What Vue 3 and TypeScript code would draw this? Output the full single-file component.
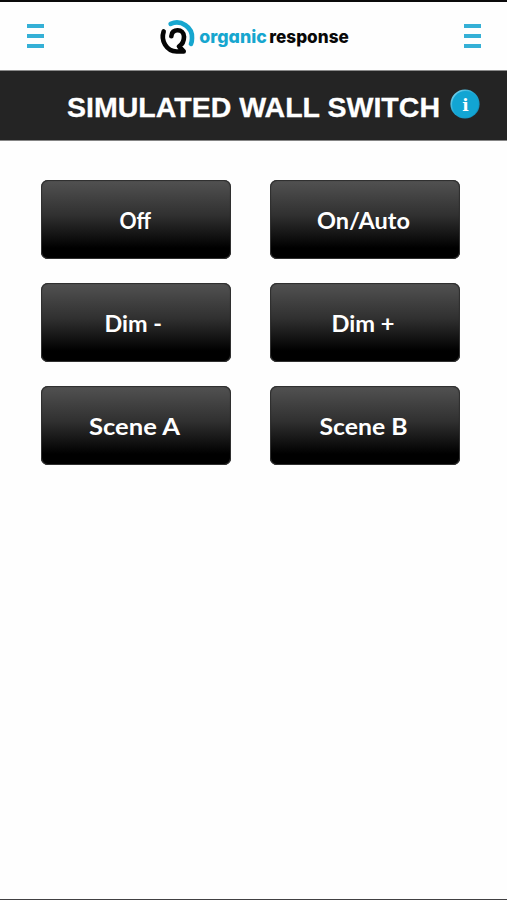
<script setup lang="ts">
interface SwitchButton {
  label: string
  x: number
  width: number
}

const buttons: SwitchButton[] = [
  { label: 'Off', x: 78.5, width: 31.5 },
  { label: 'On/Auto', x: 47, width: 93 },
  { label: 'Dim -', x: 63.5, width: 57.5 },
  { label: 'Dim +', x: 61.5, width: 63 },
  { label: 'Scene A', x: 48, width: 91 },
  { label: 'Scene B', x: 49.5, width: 88 },
]
</script>

<template>
  <div class="screen">
    <header class="topbar">
      <button class="menu" aria-label="Menu"><i></i><i></i><i></i></button>
      <svg class="logo" width="200" height="40" viewBox="-5 0 200 40">
        <g transform="translate(-9 -6.2) scale(.33333)" fill="none" stroke-width="14" stroke-linecap="round">
          <path d="M62 39C93 26 128 49 126 82Q126 92 123 99" stroke="#16a6cf" />
          <path
            d="M41 62C32 88 48 121 80 122L101 122L87 107C97 101 102 92 102 78C102 52 64 52 64 76"
            stroke="#050505"
            stroke-linejoin="round"
          />
        </g>
        <text class="brand blue" x="40.3" y="26" textLength="67.5" lengthAdjust="spacingAndGlyphs">organic</text>
        <text class="brand" x="110.3" y="26" textLength="79.5" lengthAdjust="spacingAndGlyphs">response</text>
      </svg>
      <button class="menu" aria-label="Options"><i></i><i></i><i></i></button>
    </header>

    <div class="titlebar">
      <svg class="title" width="376" height="68" viewBox="0 0 376 68">
        <text x="1" y="45.7" textLength="373" lengthAdjust="spacingAndGlyphs">SIMULATED WALL SWITCH</text>
      </svg>
      <svg class="info" width="30" height="30" viewBox="0 0 30 30">
        <defs>
          <linearGradient id="rim" x1="0" y1="0" x2="1" y2="1">
            <stop offset="0" stop-color="#8fdcf2" />
            <stop offset=".45" stop-color="#22a9d5" />
            <stop offset="1" stop-color="#0d86b4" />
          </linearGradient>
        </defs>
        <circle cx="15" cy="15" r="14.6" fill="url(#rim)" />
        <circle cx="15.3" cy="15.3" r="13.2" fill="#12a5d3" />
        <text x="15.5" y="21.8" text-anchor="middle">i</text>
      </svg>
    </div>

    <main class="grid">
      <button v-for="b in buttons" :key="b.label" class="switch">
        <svg width="190" height="79" viewBox="0 0 190 79">
          <text :x="b.x" y="48.8" :textLength="b.width" lengthAdjust="spacingAndGlyphs">{{ b.label }}</text>
        </svg>
      </button>
    </main>
  </div>
</template>

<style>
body {
  background: #fefefe;
}
</style>

<style scoped>
.screen {
  box-sizing: border-box;
  height: 900px;
  border-top: 2px solid #0b0a0b;
  border-bottom: 1px solid #414042;
  background: #fefefe;
}
button {
  padding: 0;
  border: 0;
  background: none;
}
.topbar {
  box-sizing: border-box;
  height: 68px;
  padding: 0 26px 0 27px;
  display: flex;
  align-items: center;
  justify-content: space-between;
}
.menu {
  width: 17px;
  display: flex;
  flex-direction: column;
  gap: 6px;
}
.menu i {
  height: 4px;
  background: #35b0d6;
}
.logo {
  margin-top: 1px;
}
.brand {
  font: 800 18px Inter, sans-serif;
  font-feature-settings: 'cv11';
  fill: #080808;
}
.blue {
  fill: #16a6cf;
}
.titlebar {
  box-sizing: border-box;
  height: 71px;
  padding-left: 66px;
  display: flex;
  align-items: flex-start;
  border-top: 1px solid #8b8b8b;
  border-bottom: 1px solid #858585;
  background: #242424;
}
.title text {
  font: 700 28px 'Liberation Sans', sans-serif;
  fill: #fff;
  stroke: #fff;
  stroke-width: 0.3;
}
.info {
  margin: 18px 0 0 8px;
}
.info text {
  font: 700 17px 'DejaVu Serif', serif;
  fill: #fff;
}
.grid {
  display: grid;
  grid-template-columns: 190px 190px;
  grid-auto-rows: 79px;
  column-gap: 39px;
  row-gap: 24px;
  padding: 39px 0 0 41px;
}
.switch {
  border-radius: 7px;
  background: linear-gradient(#525252, #303030 45%, #000 86%);
  box-shadow: inset 0 0 0 1px #303030, inset 0 0 2px #1c1c1c;
}
.switch svg {
  display: block;
}
.switch text {
  font: 700 23.5px Lato, sans-serif;
  fill: #fff;
}
</style>
